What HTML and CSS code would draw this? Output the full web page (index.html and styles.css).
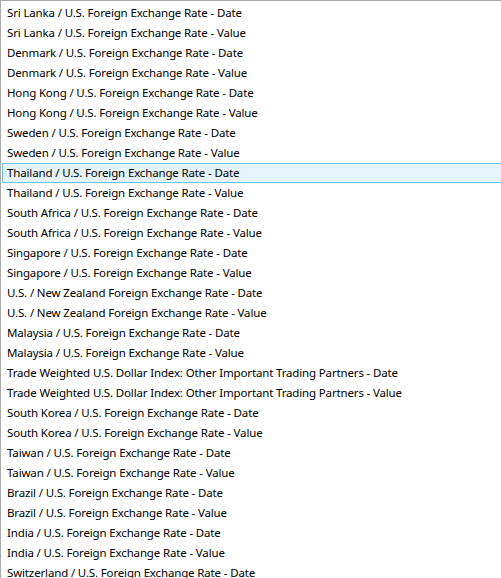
FILE: index.html
```html
<!DOCTYPE html>
<html>
<head>
<meta charset="utf-8">
<link rel="stylesheet" href="styles.css">
</head>
<body>
<div class="listbox">
  <div class="item">Sri Lanka / U.S. Foreign Exchange Rate - Date</div>
  <div class="item">Sri Lanka / U.S. Foreign Exchange Rate - Value</div>
  <div class="item">Denmark / U.S. Foreign Exchange Rate - Date</div>
  <div class="item">Denmark / U.S. Foreign Exchange Rate - Value</div>
  <div class="item">Hong Kong / U.S. Foreign Exchange Rate - Date</div>
  <div class="item">Hong Kong / U.S. Foreign Exchange Rate - Value</div>
  <div class="item">Sweden / U.S. Foreign Exchange Rate - Date</div>
  <div class="item">Sweden / U.S. Foreign Exchange Rate - Value</div>
  <div class="item hover">Thailand / U.S. Foreign Exchange Rate - Date</div>
  <div class="item">Thailand / U.S. Foreign Exchange Rate - Value</div>
  <div class="item">South Africa / U.S. Foreign Exchange Rate - Date</div>
  <div class="item">South Africa / U.S. Foreign Exchange Rate - Value</div>
  <div class="item">Singapore / U.S. Foreign Exchange Rate - Date</div>
  <div class="item">Singapore / U.S. Foreign Exchange Rate - Value</div>
  <div class="item">U.S. / New Zealand Foreign Exchange Rate - Date</div>
  <div class="item">U.S. / New Zealand Foreign Exchange Rate - Value</div>
  <div class="item">Malaysia / U.S. Foreign Exchange Rate - Date</div>
  <div class="item">Malaysia / U.S. Foreign Exchange Rate - Value</div>
  <div class="item">Trade Weighted U.S. Dollar Index: Other Important Trading Partners - Date</div>
  <div class="item">Trade Weighted U.S. Dollar Index: Other Important Trading Partners - Value</div>
  <div class="item">South Korea / U.S. Foreign Exchange Rate - Date</div>
  <div class="item">South Korea / U.S. Foreign Exchange Rate - Value</div>
  <div class="item">Taiwan / U.S. Foreign Exchange Rate - Date</div>
  <div class="item">Taiwan / U.S. Foreign Exchange Rate - Value</div>
  <div class="item">Brazil / U.S. Foreign Exchange Rate - Date</div>
  <div class="item">Brazil / U.S. Foreign Exchange Rate - Value</div>
  <div class="item">India / U.S. Foreign Exchange Rate - Date</div>
  <div class="item">India / U.S. Foreign Exchange Rate - Value</div>
  <div class="item">Switzerland / U.S. Foreign Exchange Rate - Date</div>
</div>
</body>
</html>
```

FILE: styles.css
```css
html, body {
  margin: 0;
  padding: 0;
  background: #ffffff;
  overflow: hidden;
  height: 578px;
}
.listbox {
  width: 620px;
  border-top: 1px solid #ababab;
  border-left: 1px solid #ababab;
  padding: 2px 0 0 1px;
  font-family: "Noto Sans", "Open Sans", sans-serif;
  font-size: 11.5px;
  letter-spacing: -0.15px;
  color: #000;
}
.item {
  height: 18px;
  line-height: 18px;
  border: 1px solid transparent;
  padding-left: 4px;
  white-space: nowrap;
}
.item.hover {
  background: #e5f3fb;
  border-color: #70c0e7;
}
```
